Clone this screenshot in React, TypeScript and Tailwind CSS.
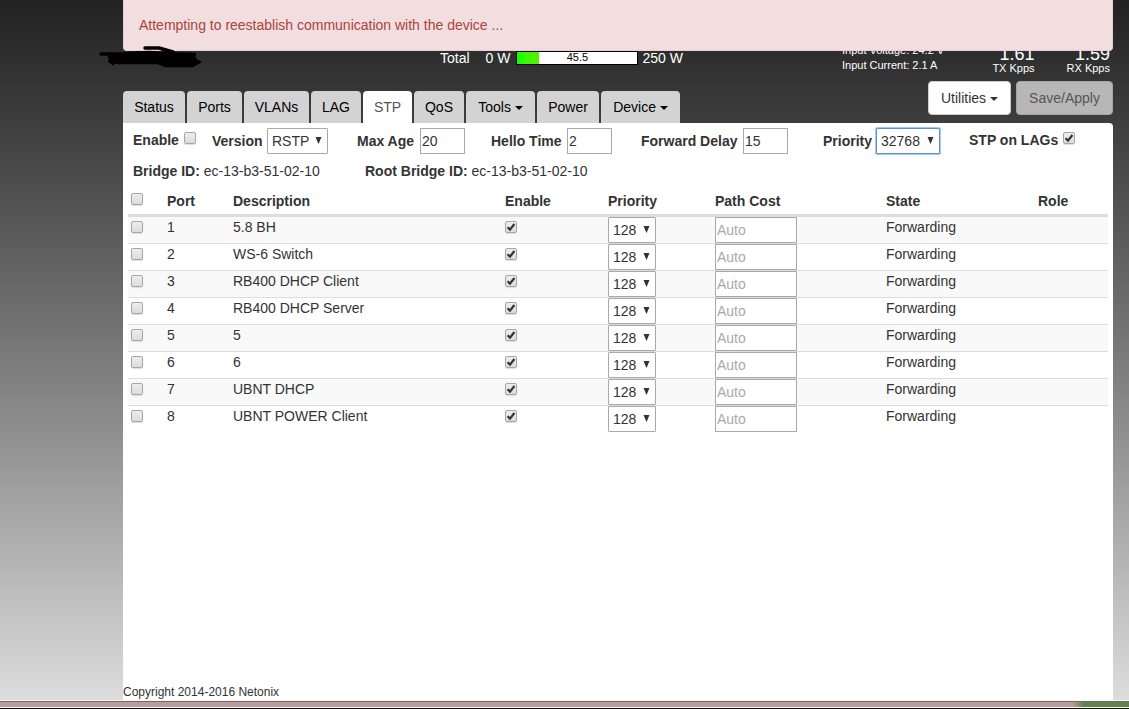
import React from 'react'
import {clsx} from 'clsx'

interface Port {
    id: number
    description: string
}

const PORTS: Port[] = [
    {id: 1, description: '5.8 BH'},
    {id: 2, description: 'WS-6 Switch'},
    {id: 3, description: 'RB400 DHCP Client'},
    {id: 4, description: 'RB400 DHCP Server'},
    {id: 5, description: '5'},
    {id: 6, description: '6'},
    {id: 7, description: 'UBNT DHCP'},
    {id: 8, description: 'UBNT POWER Client'},
]

const TABS = [
    {name: 'Status', width: 'w-[62px]'},
    {name: 'Ports', width: 'w-[55px]'},
    {name: 'VLANs', width: 'w-[65px]'},
    {name: 'LAG', width: 'w-[50px]'},
    {name: 'STP', width: 'w-[49px]', active: true},
    {name: 'QoS', width: 'w-[50px]'},
    {name: 'Tools', width: 'w-[69px]', menu: true},
    {name: 'Power', width: 'w-[62px]'},
    {name: 'Device', width: 'w-[79px]', menu: true},
]

function Caret() {
    return (
        <svg className="mb-px inline-block" width="8" height="4" viewBox="0 0 8 4" aria-hidden="true">
            <path d="M0 0h8L4 4z" fill="currentColor" />
        </svg>
    )
}

function Checkbox({label, checked = false, id}: {label?: string; checked?: boolean; id?: string}) {
    return (
        <span className="relative block size-3 shrink-0">
            <input
                id={id}
                type="checkbox"
                aria-label={label}
                defaultChecked={checked}
                className="peer block size-3 appearance-none rounded-[2px] border border-[#a6a6a6] bg-linear-to-b from-[#ededed] to-[#dcdcdc] shadow-[0_1px_1px_#ddd]"
            />
            <svg className="pointer-events-none absolute inset-0 hidden peer-checked:block" width="12" height="12" viewBox="0 0 12 12" aria-hidden="true">
                <path d="M2.6 6.2 5 8.6 9.4 3" fill="none" stroke="#333" strokeWidth="2.2" />
            </svg>
        </span>
    )
}

interface SelectProps {
    id?: string
    label?: string
    value: string
    className: string
}

function Select({id, label, value, className}: SelectProps) {
    return (
        <span className={clsx('relative block h-[26px] shrink-0', className)}>
            <select
                id={id}
                aria-label={label}
                defaultValue={value}
                className="block size-full appearance-none rounded-[1px] border border-[#a9a9a9] bg-white pl-1 text-[#333] in-[.focused]:border-[#5e8fd8] in-[.focused]:ring-1 in-[.focused]:ring-[#a8c6f5]"
            >
                <option>{value}</option>
            </select>
            <svg className="pointer-events-none absolute top-[9px] right-[6px]" width="7" height="7" viewBox="0 0 7 7" aria-hidden="true">
                <path d="M.5 0h6L3.5 7z" fill="#333" />
            </svg>
        </span>
    )
}

function NumberField({id, label, value, className}: {id: string; label: string; value: string; className: string}) {
    return (
        <div className={clsx('flex shrink-0 items-center justify-between', className)}>
            <label htmlFor={id} className="font-bold">{label}</label>
            <input id={id} type="text" defaultValue={value} className="h-[26px] w-[45px] border border-[#a9a9a9] bg-white px-px" />
        </div>
    )
}

function Rate({value, unit}: {value: string; unit: string}) {
    return (
        <div className="text-right">
            <div className="text-lg leading-4">{value}</div>
            <div className="text-[11px] leading-3">{unit}</div>
        </div>
    )
}

function PowerSummary() {
    return (
        <div className="flex h-[81px] pt-[44px] text-white">
            <div className="ml-[317px] flex h-7 items-center">
                <span>Total</span>
                <span className="ml-4">0 W</span>
                <div className="relative ml-[6px] flex h-[14px] w-[122px] border border-black bg-white">
                    <div className="w-[22px] bg-linear-to-r from-[#00ff00] to-[#55f000]" />
                    <span className="absolute inset-0 text-center text-[11px] leading-[10px] text-black">45.5</span>
                </div>
                <span className="ml-1">250 W</span>
            </div>
            <div className="ml-auto w-[130px] text-[11px] leading-[15px]">
                <div className="-mt-px">Input Voltage: 24.2 V</div>
                <div>Input Current: 2.1 A</div>
            </div>
            <div className="mr-[3px] flex w-[138px] justify-end gap-8 pt-[2px]">
                <Rate value="1.61" unit="TX Kpps" />
                <Rate value="1.59" unit="RX Kpps" />
            </div>
        </div>
    )
}

function NavBar() {
    return (
        <div className="flex h-[42px] items-start justify-between">
            <nav className="mt-[10px] flex h-8">
                {TABS.map((tab) => (
                    <a
                        key={tab.name}
                        href="#"
                        className={clsx(
                            'mr-[2px] flex items-center justify-center rounded-t-[4px]',
                            tab.width,
                            tab.active ? 'bg-white text-[#555]' : 'bg-[#d3d3d3] text-black'
                        )}
                    >
                        <span>{tab.name} {tab.menu && <Caret />}</span>
                    </a>
                ))}
            </nav>
            <div className="flex gap-[5px]">
                <button type="button" className="h-[34px] w-[83px] rounded-[4px] border border-[#ccc] bg-white">
                    Utilities <Caret />
                </button>
                <button type="button" className="h-[34px] w-[97px] rounded-[4px] border border-[#a5a5a5] bg-[#b7b7b7] text-[#555]">
                    Save/Apply
                </button>
            </div>
        </div>
    )
}

function StpSettings() {
    return (
        <div className="flex h-[35px] items-center pl-[10px]">
            <div className="mb-[2px] flex w-[79px] items-start gap-[5px]">
                <label htmlFor="stp-enable" className="font-bold">Enable</label>
                <div className="pt-[2px]"><Checkbox id="stp-enable" /></div>
            </div>
            <div className="flex w-[116px] items-center justify-between">
                <label htmlFor="version" className="font-bold">Version</label>
                <Select id="version" value="RSTP" className="w-[61px]" />
            </div>
            <NumberField id="max-age" label="Max Age" value="20" className="ml-[29px] w-[108px]" />
            <NumberField id="hello-time" label="Hello Time" value="2" className="ml-[26px] w-[121px]" />
            <NumberField id="forward-delay" label="Forward Delay" value="15" className="ml-[29px] w-[147px]" />
            <div className="focused ml-[35px] flex w-[117px] items-center justify-between">
                <label htmlFor="priority" className="font-bold">Priority</label>
                <Select id="priority" value="32768" className="w-[64px]" />
            </div>
            <div className="mb-[2px] ml-[29px] flex w-[106px] items-start justify-between">
                <label htmlFor="stp-lags" className="font-bold">STP on LAGs</label>
                <div className="pt-[2px]"><Checkbox id="stp-lags" checked /></div>
            </div>
        </div>
    )
}

function PortTable() {
    return (
        <table className="w-full table-fixed text-left">
            <colgroup>
                <col className="w-[37px]" />
                <col className="w-[66px]" />
                <col className="w-[272px]" />
                <col className="w-[103px]" />
                <col className="w-[107px]" />
                <col className="w-[171px]" />
                <col className="w-[152px]" />
                <col />
            </colgroup>
            <thead>
                <tr className="h-[30px] border-b-3 border-[#ddd]">
                    <th className="pl-[3px]"><Checkbox label="Select all ports" /></th>
                    <th className="pt-1 pl-[2px]">Port</th>
                    <th className="pt-1 pl-[2px]">Description</th>
                    <th className="pt-1 pl-[2px]">Enable</th>
                    <th className="pt-1 pl-[2px]">Priority</th>
                    <th className="pt-1 pl-[2px]">Path Cost</th>
                    <th className="pt-1 pl-[2px]">State</th>
                    <th className="pt-1 pl-[2px]">Role</th>
                </tr>
            </thead>
            <tbody>
                {PORTS.map((port) => (
                    <tr key={port.id} className="h-[27px] border-b border-[#ddd] last:border-0 odd:bg-[#f9f9f9]">
                        <td className="pb-[6px] pl-[3px]"><Checkbox label={`Select port ${port.id}`} /></td>
                        <td className="pb-[6px] pl-[2px]">{port.id}</td>
                        <td className="pb-[6px] pl-[2px]">{port.description}</td>
                        <td className="pb-[6px] pl-[2px]"><Checkbox label={`Enable port ${port.id}`} checked /></td>
                        <td className="pl-[2px]">
                            <Select label={`Priority of port ${port.id}`} value="128" className="w-[48px]" />
                        </td>
                        <td className="pl-[2px]">
                            <input
                                type="text"
                                aria-label={`Path cost of port ${port.id}`}
                                placeholder="Auto"
                                className="block h-[26px] w-[82px] border border-[#a9a9a9] bg-white px-px placeholder:text-[#a9a9a9]"
                            />
                        </td>
                        <td className="pb-[6px] pl-[2px]">Forwarding</td>
                        <td />
                    </tr>
                ))}
            </tbody>
        </table>
    )
}

export default function App() {
    return (
        <div className="flex min-h-screen flex-col bg-[#f5f5f5] font-['Liberation_Sans',Arial,sans-serif] text-sm text-[#333]">
            <div className="flex flex-1 flex-col bg-linear-to-b from-[#222] to-[#ddd] pr-4 pl-[123px]">
                <div className="relative flex flex-1 flex-col">
                    <div role="alert" className="absolute inset-x-0 top-0 z-10 h-[51px] rounded-b-[4px] border border-t-0 border-[#ebccd1] bg-[#f2dede] px-[15px] pt-[15px] text-[#a94442]">
                        Attempting to reestablish communication with the device ...
                    </div>
                    {/* marker over the device name */}
                    <svg className="absolute top-[45px] -left-6 z-20" width="104" height="24" viewBox="0 0 104 24" aria-hidden="true">
                        <g stroke="#000" strokeLinejoin="round" strokeLinecap="round">
                            <path d="M2 9h20M46 3h14l14 4" fill="none" strokeWidth="3.5" />
                            <path d="M10 16l4 3M10 12l16-4 24-1 16 1 30 1-1 3 3 4 3 1-4 2-3 2H67l-8-3H20l-7-1z" strokeWidth="2.5" />
                        </g>
                    </svg>
                    <PowerSummary />
                    <NavBar />
                    <main className="flex flex-1 flex-col rounded-tr-[4px] bg-white">
                        <StpSettings />
                        <div className="flex h-[27px] items-center pb-[2px] pl-[10px]">
                            <div className="w-[232px]"><b>Bridge ID:</b> ec-13-b3-51-02-10</div>
                            <div><b>Root Bridge ID:</b> ec-13-b3-51-02-10</div>
                        </div>
                        <div className="px-[5px]">
                            <PortTable />
                        </div>
                        <footer className="mt-auto text-xs">Copyright 2014-2016 Netonix</footer>
                    </main>
                </div>
            </div>
            <div className="mt-px h-[6px] border-t border-[#786a68] bg-linear-to-r from-[#bb9c98] from-95% to-[#5f834b] to-96%" />
            <div className="mt-px h-px bg-[#111]" />
        </div>
    )
}
